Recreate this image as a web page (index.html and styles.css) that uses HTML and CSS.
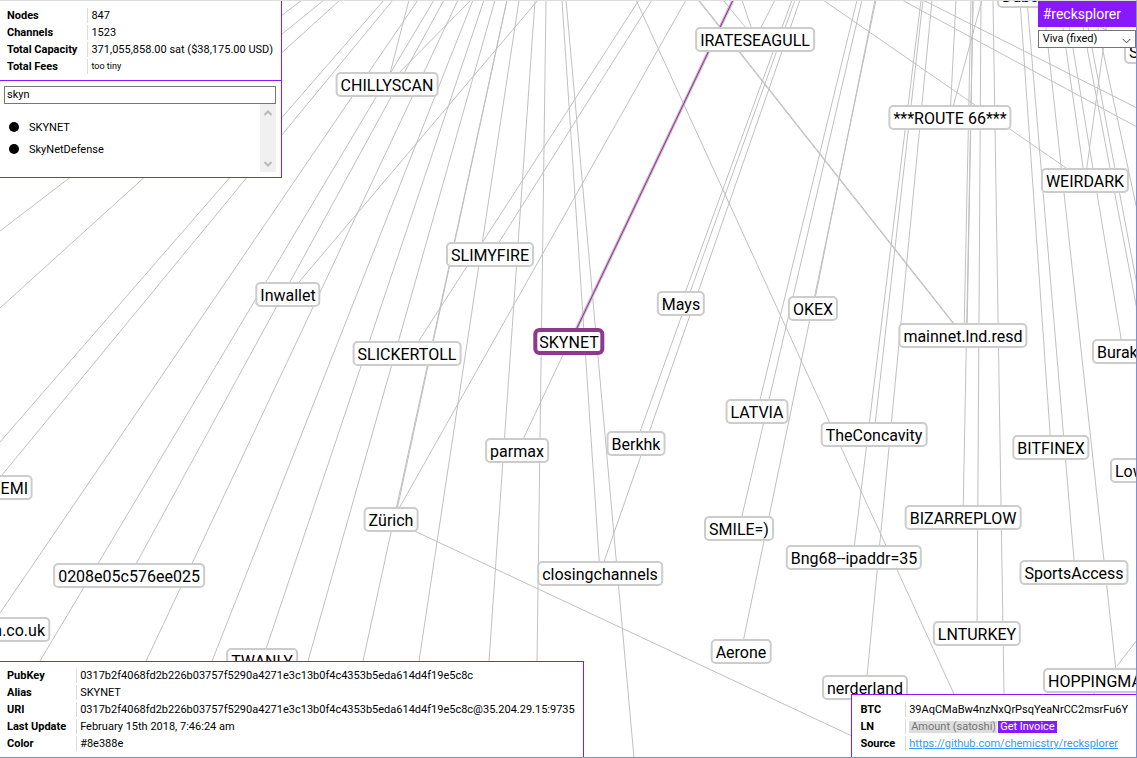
FILE: index.html
```html
<!DOCTYPE html>
<html lang="en">
<head>
<meta charset="utf-8">
<title>#recksplorer</title>
<link rel="stylesheet" href="styles.css">
</head>
<body>
<main class="app">
  <section class="graph" aria-label="Channel graph">
    <svg class="edges" aria-hidden="true">
      <path d="M0 231L302 0M250 60L324 0M0 308L340 0M0 442L384 0M2 475L393 0M0 613L418 0M40 661L434 0M130 575L444 0M146 661L458 0M212 661L473 0M262 661L484 0M308 661L495 0M363 661L507 0M395 519L507 0M393 519L686 0M419 661L519 0M489 661L535 0M537 661L546 0M600 573L562 0M634 758L566 0"/>
      <path d="M387 85L409 0M387 85L471 0M288 295L538 0M411 353L639 0M491 255L652 0M569 342L518 450M391 520L852 736M698 0L963 336M699 0L963 335M755 39L723 0M755 39L742 0M755 39L775 0M681 304L792 0M636 443L795 0M600 573L800 0M954 694L636 0M757 412L857 0M739 529L862 0M741 652L876 0M813 309L875 0"/>
      <path d="M823 0L1085 181M902 0L1137 127M923 0L1137 108M921 0L853 557M923 0L874 434M932 0L866 687M950 118L956 0M950 118L982 0M971 0L964 335M973 0L967 335M973 0L963 517M981 0L977 633M993 0L1004 694M1020 0L1051 447M1027 0L1075 572M1043 0L1117 680M1059 0L1085 181M1065 0L1123 350M1078 0L1137 310M1083 0L1137 285M1092 0L1137 210M1110 0L1085 181M1100 27L1137 44M1117 666L1137 640M1085 704L1100 687"/>
      <path class="edge-active-soft" d="M733 0L576 330"/>
      <path class="edge-active" d="M733 0L577 328"/>
    </svg>
    <span class="node from-left" style="left:997px;top:-5px">Dubs</span>
    <span class="node from-left" style="left:1124px;top:51px">S</span>
    <span class="node" style="left:387px;top:84px">CHILLYSCAN</span>
    <span class="node" style="left:755px;top:39px">IRATESEAGULL</span>
    <span class="node" style="left:950px;top:117px">***ROUTE 66***</span>
    <span class="node" style="left:1085px;top:180px">WEIRDARK</span>
    <span class="node" style="left:490px;top:254px">SLIMYFIRE</span>
    <span class="node" style="left:288px;top:294px">Inwallet</span>
    <span class="node" style="left:407px;top:353px">SLICKERTOLL</span>
    <span class="node selected" style="left:569px;top:341px">SKYNET</span>
    <span class="node" style="left:681px;top:303px">Mays</span>
    <span class="node" style="left:813px;top:308px">OKEX</span>
    <span class="node" style="left:963px;top:335px">mainnet.lnd.resd</span>
    <span class="node from-left" style="left:1092px;top:351px">Burak</span>
    <span class="node" style="left:757px;top:411px">LATVIA</span>
    <span class="node" style="left:874px;top:434px">TheConcavity</span>
    <span class="node" style="left:517px;top:450px">parmax</span>
    <span class="node" style="left:636px;top:443px">Berkhk</span>
    <span class="node" style="left:1051px;top:447px">BITFINEX</span>
    <span class="node from-left" style="left:1110px;top:470px">Low</span>
    <span class="node from-right" style="left:33px;top:487px">EMI</span>
    <span class="node" style="left:391px;top:519px">Zürich</span>
    <span class="node" style="left:739px;top:528px">SMILE=)</span>
    <span class="node" style="left:963px;top:517px">BIZARREPLOW</span>
    <span class="node" style="left:854px;top:557px">Bng68--ipaddr=35</span>
    <span class="node" style="left:1074px;top:572px">SportsAccess</span>
    <span class="node" style="left:600px;top:573px">closingchannels</span>
    <span class="node" style="left:129px;top:575px">0208e05c576ee025</span>
    <span class="node from-right" style="left:50px;top:629px">n.co.uk</span>
    <span class="node" style="left:977px;top:633px">LNTURKEY</span>
    <span class="node" style="left:262px;top:660px">TWANLY</span>
    <span class="node" style="left:741px;top:651px">Aerone</span>
    <span class="node" style="left:865px;top:687px">nerderland</span>
    <span class="node from-left" style="left:1043px;top:680px">HOPPINGMA</span>
  </section>

  <aside class="panel overview">
    <div class="stats">
      <table class="facts">
        <tr><th scope="row">Nodes</th><td>847</td></tr>
        <tr><th scope="row">Channels</th><td>1523</td></tr>
        <tr><th scope="row">Total Capacity</th><td>371,055,858.00 sat ($38,175.00 USD)</td></tr>
        <tr><th scope="row">Total Fees</th><td><small>too tiny</small></td></tr>
      </table>
    </div>
    <div class="search">
      <input class="search-box" type="text" value="skyn" aria-label="Search nodes">
      <div class="results">
        <ul class="result-list">
          <li><span class="dot"></span>SKYNET</li>
          <li><span class="dot"></span>SkyNetDefense</li>
        </ul>
        <div class="scrollbar" aria-hidden="true">
          <svg width="8" height="6" viewBox="0 0 8 6"><path d="M.5 5L4 1.500L7.500 5"/></svg>
          <svg width="8" height="6" viewBox="0 0 8 6"><path d="M.5 1L4 4.500L7.500 1"/></svg>
        </div>
      </div>
    </div>
  </aside>

  <header class="brand">
    <h1 class="title">#recksplorer</h1>
    <div class="layout-picker">
      <select class="layout-select" aria-label="Graph layout"><option>Viva (fixed)</option></select>
      <svg class="chevron" width="9" height="6" viewBox="0 0 9 6" aria-hidden="true"><path d="M.5 .8L4.500 4.800L8.500 .8"/></svg>
    </div>
  </header>

  <aside class="panel details">
    <table class="facts">
      <tr><th scope="row">PubKey</th><td>0317b2f4068fd2b226b03757f5290a4271e3c13b0f4c4353b5eda614d4f19e5c8c</td></tr>
      <tr><th scope="row">Alias</th><td>SKYNET</td></tr>
      <tr><th scope="row">URI</th><td>0317b2f4068fd2b226b03757f5290a4271e3c13b0f4c4353b5eda614d4f19e5c8c@35.204.29.15:9735</td></tr>
      <tr><th scope="row">Last Update</th><td>February 15th 2018, 7:46:24 am</td></tr>
      <tr><th scope="row">Color</th><td>#8e388e</td></tr>
    </table>
  </aside>

  <aside class="panel donate">
    <table class="facts">
      <tr><th scope="row">BTC</th><td>39AqCMaBw4nzNxQrPsqYeaNrCC2msrFu6Y</td></tr>
      <tr><th scope="row">LN</th><td><form class="invoice"><input class="amount" type="text" placeholder="Amount (satoshi)" aria-label="Amount (satoshi)"><button class="get-invoice" type="button">Get Invoice</button></form></td></tr>
      <tr><th scope="row">Source</th><td><a class="source" href="https://github.com/chemicstry/recksplorer">https://github.com/chemicstry/recksplorer</a></td></tr>
    </table>
  </aside>
</main>
</body>
</html>
```
FILE: styles.css
```css
* { box-sizing: border-box; }

html, body { height: 100%; }

body {
  margin: 0;
  background: #fff;
  color: #000;
  font-family: Roboto, "Liberation Sans", sans-serif;
  font-size: 11px;
}

.app {
  position: relative;
  height: 100%;
  overflow: hidden;
  border-top: 1px solid #ddd;
  border-right: 1px solid #7b90dd;
  border-bottom: 1px solid #7b90dd;
}

/* Graph canvas, one pixel up so that coordinates count from the window edge */
.graph {
  position: absolute;
  inset: -1px 0 0 0;
  overflow: hidden;
}

.edges {
  display: block;
  width: 100%;
  height: 100%;
  fill: none;
  stroke: #c0c0c0;
  stroke-width: 1;
}

.edge-active-soft { stroke: #cdb0cd; stroke-width: 3; }
.edge-active { stroke: #8e388e; stroke-width: 1; }

.node {
  position: absolute;
  transform: translate(-50%, -12px);
  padding: 3px 3px 0;
  border: 2px solid #ccc;
  border-radius: 5px;
  background: #fff;
  font-size: 16px;
  line-height: 18px;
  white-space: nowrap;
}

.from-left { transform: translate(0, -12px); }
.from-right { transform: translate(-100%, -12px); }

.selected {
  transform: translate(-50%, -13px);
  padding: 2px 2px 0;
  border: 4px solid #8e388e;
  border-radius: 6px;
  line-height: 17px;
}

.panel {
  position: absolute;
  border: 0 solid #8819ff;
  background: #fff;
}

.overview {
  top: 0;
  left: 0;
  border-width: 0 1px 1px 0;
}

.details {
  bottom: 0;
  left: 0;
  padding: 4px 6px 4px 5px;
  border-width: 1px 1px 0 0;
}

.donate {
  right: 0;
  bottom: 0;
  padding: 5px 6px 4px 6px;
  border-width: 1px 0 0 1px;
}

.facts {
  border-collapse: separate;
  border-spacing: 2px;
  line-height: 15px;
  white-space: nowrap;
}

.facts tr { height: 15px; }

.facts th {
  padding: 0 8px 0 0;
  text-align: left;
  font-weight: 700;
}

.facts td {
  padding: 0 0 0 3px;
  border-left: 1px solid #ddd;
}

.facts small { display: block; font-size: 9px; }

.stats {
  padding: 5px 6px 4px 5px;
  border-bottom: 1px solid #8819ff;
}

.search { padding: 5px; padding-left: 4px; }

.search-box {
  display: block;
  width: 100%;
  height: 18px;
  padding: 0 2px 1px;
  border: 1px solid #767676;
  background: #fff;
  font: inherit;
}

.results {
  display: flex;
  height: 68px;
}

.result-list {
  flex: 1;
  margin: 0;
  padding: 12px 0 0 5px;
  list-style: none;
}

.result-list li {
  display: flex;
  align-items: center;
  gap: 10px;
  height: 22px;
}

.dot {
  width: 10px;
  height: 10px;
  border-radius: 50%;
  background: #000;
}

.scrollbar {
  display: flex;
  flex-direction: column;
  align-items: center;
  justify-content: space-between;
  width: 16px;
  padding: 6px 0 5px;
  background: #f0f0f0;
  fill: none;
  stroke: #bababa;
  stroke-width: 2;
}

.brand {
  position: absolute;
  top: 0;
  right: 0;
  display: flex;
  flex-direction: column;
  gap: 3px;
}

.title {
  margin: 0;
  padding: 0 15px 0 5px;
  background: #8819ff;
  color: #fff;
  font-size: 14px;
  font-weight: 400;
  line-height: 26px;
}

.layout-picker { position: relative; }

.layout-select {
  display: block;
  width: 100%;
  height: 18px;
  padding: 0 4px 2px;
  border: 1px solid #767676;
  border-radius: 0;
  background: #fff;
  color: #000;
  font: inherit;
  appearance: none;
}

.chevron {
  position: absolute;
  right: 5px;
  bottom: 4px;
  fill: none;
  stroke: #444;
}

.invoice {
  display: flex;
  align-items: center;
  gap: 1px;
  height: 15px;
}

.amount, .get-invoice {
  height: 12px;
  padding: 0 2px;
  border: 0;
  border-radius: 0;
  font: inherit;
  line-height: 12px;
}

.amount { width: 88px; background: #ddd; }
.amount::placeholder { color: #757575; }
.get-invoice { background: #8819ff; color: #fff; }
.source { color: #3399ff; }
```
